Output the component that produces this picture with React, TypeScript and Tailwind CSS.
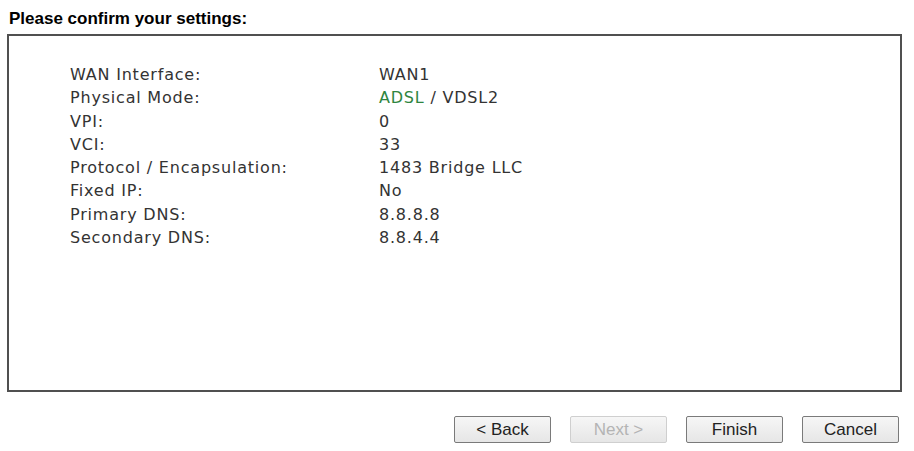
import React from "react";

const rows: [string, React.ReactNode][] = [
  ["WAN Interface:", "WAN1"],
  ["Physical Mode:", <><span className="text-[#2e8540]">ADSL</span> / VDSL2</>],
  ["VPI:", "0"],
  ["VCI:", "33"],
  ["Protocol / Encapsulation:", "1483 Bridge LLC"],
  ["Fixed IP:", "No"],
  ["Primary DNS:", "8.8.8.8"],
  ["Secondary DNS:", "8.8.4.4"],
];

function Btn({ label, disabled }: { label: string; disabled?: boolean }) {
  return (
    <button
      className={
        "w-[97px] h-[27px] rounded-[2px] border bg-gradient-to-b from-[#f6f6f6] to-[#e6e6e6] text-[17px] leading-none font-['Liberation_Sans',Arial,sans-serif] " +
        (disabled ? "border-[#cfcfcf] text-[#b4b4b4]" : "border-[#7a7a7a] text-[#222]")
      }
    >
      {label}
    </button>
  );
}

export default function App() {
  return (
    <div className="w-[914px] h-[451px] bg-white relative overflow-hidden">
      <div className="pl-[9px] pt-[9px] h-[34px] font-['Liberation_Sans',Arial,sans-serif] font-bold text-[17px] leading-[19px] text-black">
        Please confirm your settings:
      </div>
      <div className="ml-[7px] w-[895px] h-[358px] border-2 border-[#505050] pt-[27px] pl-[61px] font-['DejaVu_Sans',Verdana,sans-serif] text-[16px] tracking-[0.8px] text-[#333]">
        {rows.map(([k, v]) => (
          <div key={k} className="flex h-[23.3px] leading-[23.3px]">
            <div className="w-[309px]">{k}</div>
            <div>{v}</div>
          </div>
        ))}
      </div>
      <div className="flex justify-end gap-[19px] pr-[15px] mt-[24px]">
        <Btn label="< Back" />
        <Btn label="Next >" disabled />
        <Btn label="Finish" />
        <Btn label="Cancel" />
      </div>
    </div>
  );
}
